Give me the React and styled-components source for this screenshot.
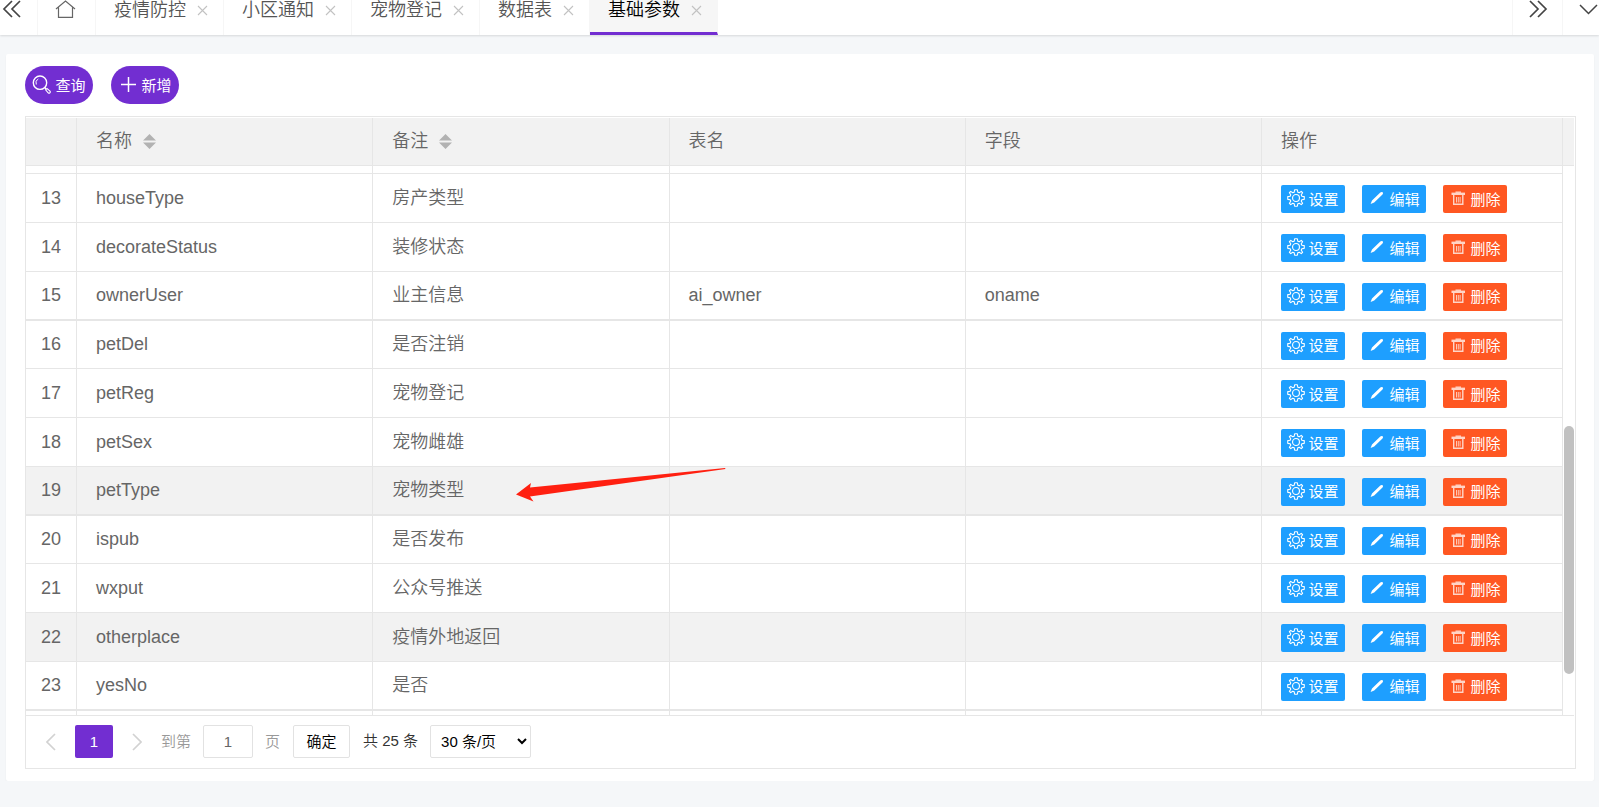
import { useState } from 'react';
import styled, { createGlobalStyle, ThemeProvider } from 'styled-components';

const theme = {
  purple: '#722ed1',
  blue: '#1e9fff',
  orange: '#ff5722',
  text: '#666',
  line: '#e6e6e6',
  head: '#f2f2f2',
};

const TABS = ['疫情防控', '小区通知', '宠物登记', '数据表', '基础参数'];

const ROWS = [
  { id: 13, name: 'houseType', remark: '房产类型' },
  { id: 14, name: 'decorateStatus', remark: '装修状态' },
  { id: 15, name: 'ownerUser', remark: '业主信息', table: 'ai_owner', field: 'oname' },
  { id: 16, name: 'petDel', remark: '是否注销' },
  { id: 17, name: 'petReg', remark: '宠物登记' },
  { id: 18, name: 'petSex', remark: '宠物雌雄' },
  { id: 19, name: 'petType', remark: '宠物类型', shaded: true, marked: true },
  { id: 20, name: 'ispub', remark: '是否发布' },
  { id: 21, name: 'wxput', remark: '公众号推送' },
  { id: 22, name: 'otherplace', remark: '疫情外地返回', shaded: true },
  { id: 23, name: 'yesNo', remark: '是否' },
];

// 图标 //
const LineIcon = ({ size, height, box, width = 1, children }) => (
  <svg
    width={size}
    height={height || size}
    viewBox={box || `0 0 ${size} ${height || size}`}
    fill="none"
    stroke="currentColor"
    strokeWidth={width}
    aria-hidden="true"
  >
    {children}
  </svg>
);

const DoubleLeftIcon = () => (
  <LineIcon size={20} width={1.7}>
    <path d="M10 1L2 9L10 17M18 1L10 9L18 17" />
  </LineIcon>
);

const DoubleRightIcon = () => (
  <LineIcon size={20} width={1.7}>
    <path d="M1 1L9 9L1 17M9 1L17 9L9 17" />
  </LineIcon>
);

const DownIcon = () => (
  <LineIcon size={20} width={1.5}>
    <path d="M1 5L9.5 13.5L18 5" />
  </LineIcon>
);

const HomeIcon = () => (
  <LineIcon size={22} height={20} width={1.2}>
    <path d="M1 9L10.5 1L20 9M3.5 7.5V17.3H17.5V7.5" />
  </LineIcon>
);

const CloseIcon = () => (
  <LineIcon size={11} width={1.1}>
    <path d="M1 1L10 10M10 1L1 10" />
  </LineIcon>
);

const SearchIcon = () => (
  <LineIcon size={19} width={1.4}>
    <circle cx="8" cy="7.7" r="6.7" />
    <path d="M4.3 9.5A4.2 4.2 0 0 1 6.3 4" strokeWidth="1" />
    <path d="M12.8 12.5L14 14" />
    <path d="M13.6 14.8L15 13.4L18.2 16.4Q18.5 17.2 17.8 18Q17 18.5 16.4 18Z" strokeWidth="1.1" />
  </LineIcon>
);

const PlusIcon = () => (
  <LineIcon size={19} width={1.5}>
    <path d="M10.5 2V17M3 9.5H18" />
  </LineIcon>
);

const GearIcon = () => (
  <LineIcon size={18} box="0 0 24 24" width={1.5}>
    <circle cx="12" cy="12" r="4.6" />
    <path
      strokeLinejoin="round"
      d="M10.2 1H13.8L14.4 4.2L16.4 5L19 3.2L20.8 5L19 7.6L19.8 9.6L23 10.2V13.8L19.8 14.4L19 16.4L20.8 19L19 20.8L16.4 19L14.4 19.8L13.8 23H10.2L9.6 19.8L7.6 19L5 20.8L3.2 19L5 16.4L4.2 14.4L1 13.8V10.2L4.2 9.6L5 7.6L3.2 5L5 3.2L7.6 5L9.6 4.2Z"
    />
  </LineIcon>
);

const PencilIcon = () => (
  <svg width="18" height="18" viewBox="0 0 18 18" fill="currentColor" aria-hidden="true">
    <path d="M12.3 3.6Q13.5 2.4 14.7 3.3Q15.6 4.4 14.5 5.5L6.2 13.4L2.6 15L4 11.4Z" />
  </svg>
);

const TrashIcon = () => (
  <LineIcon size={18} width={1.4}>
    <g opacity="0.75">
      <path d="M2.5 4.8H16" strokeWidth="2.4" />
      <path d="M6.5 3.2H12" />
      <path d="M4.7 6V15.3H13.8V6" />
      <path d="M7.5 8V13.5M9.3 8V13.5M11.1 8V13.5" strokeWidth="0.9" />
    </g>
  </LineIcon>
);

const SortIcon = () => (
  <svg width="13" height="15" viewBox="0 0 13 15" fill="#b2b2b2" aria-hidden="true">
    <path d="M6.5 0L13 6.5H0ZM0 8.5H13L6.5 15Z" />
  </svg>
);

const Pointer = () => (
  <StyledPointer viewBox="0 0 210 36" aria-hidden="true">
    <path d="M0 27.5L15 16L14 20.5L209 1L209.5 2L14 29.5L17.5 34.5Z" fill="#ff2011" />
  </StyledPointer>
);

const TabBar = () => {
  const [active, setActive] = useState('基础参数');
  return (
    <StyledTabBar>
      <BarButton $first aria-label="向左">
        <DoubleLeftIcon />
      </BarButton>
      <HomeButton aria-label="主页">
        <HomeIcon />
      </HomeButton>
      <TabList>
        {TABS.map((tab) => (
          <Tab key={tab} $active={tab === active}>
            <TabName $active={tab === active} onClick={() => setActive(tab)}>
              {tab}
            </TabName>
            <TabClose aria-label={`关闭${tab}`}>
              <CloseIcon />
            </TabClose>
          </Tab>
        ))}
      </TabList>
      <BarButton aria-label="向右">
        <DoubleRightIcon />
      </BarButton>
      <MenuButton aria-label="更多">
        <DownIcon />
      </MenuButton>
    </StyledTabBar>
  );
};

const ParamRow = ({ row }) => (
  <Row $shaded={row.shaded}>
    <Cell $center>{row.id}</Cell>
    <Cell>{row.name}</Cell>
    <Cell>
      {row.remark}
      {row.marked && <Pointer />}
    </Cell>
    <Cell>{row.table}</Cell>
    <Cell>{row.field}</Cell>
    <Cell>
      <Actions>
        <ActionButton>
          <GearIcon />
          设置
        </ActionButton>
        <ActionButton>
          <PencilIcon />
          编辑
        </ActionButton>
        <ActionButton $danger>
          <TrashIcon />
          删除
        </ActionButton>
      </Actions>
    </Cell>
  </Row>
);

const EdgeRow = ({ height }) => (
  <SliverRow $height={height}>
    {[1, 2, 3, 4, 5, 6].map((n) => (
      <Cell key={n} />
    ))}
  </SliverRow>
);

const Pager = () => {
  const [page, setPage] = useState('1');
  return (
    <StyledPager>
      <PageArrow disabled aria-label="上一页">
        <LineIcon size={10} height={18} width={1.7}>
          <path d="M9 1L1 9L9 17" />
        </LineIcon>
      </PageArrow>
      <CurrentPage>1</CurrentPage>
      <PageArrow disabled aria-label="下一页">
        <LineIcon size={10} height={18} width={1.7}>
          <path d="M1 1L9 9L1 17" />
        </LineIcon>
      </PageArrow>
      <JumpLabel>
        到第
        <PageInput value={page} onChange={(e) => setPage(e.target.value)} />页
      </JumpLabel>
      <ConfirmButton>确定</ConfirmButton>
      <Total>共 25 条</Total>
      <PageSize aria-label="每页条数" defaultValue="30">
        <option value="30">30 条/页</option>
        <option value="60">60 条/页</option>
        <option value="90">90 条/页</option>
      </PageSize>
    </StyledPager>
  );
};

const App = () => {
  return (
    <ThemeProvider theme={theme}>
      <GlobalStyle />
      <TabBar />
      <Card>
        <Toolbar>
          <RoundButton>
            <SearchIcon />
            查询
          </RoundButton>
          <RoundButton>
            <PlusIcon />
            新增
          </RoundButton>
        </Toolbar>
        <TableBox>
          <TableView>
            <Table>
              <colgroup>
                <Col $width="51px" />
                <Col />
                <Col />
                <Col />
                <Col />
                <Col $width="301px" />
              </colgroup>
              <thead>
                <tr>
                  <HeadCell aria-label="序号" />
                  <HeadCell>
                    <SortLabel>
                      名称
                      <SortIcon />
                    </SortLabel>
                  </HeadCell>
                  <HeadCell>
                    <SortLabel>
                      备注
                      <SortIcon />
                    </SortLabel>
                  </HeadCell>
                  <HeadCell>表名</HeadCell>
                  <HeadCell>字段</HeadCell>
                  <HeadCell>操作</HeadCell>
                </tr>
              </thead>
              <tbody>
                <EdgeRow height={8} />
                {ROWS.map((row) => (
                  <ParamRow key={row.id} row={row} />
                ))}
                <EdgeRow height={4} />
              </tbody>
            </Table>
            <ScrollColumn>
              <ScrollHead />
              <ScrollTrack>
                <ScrollThumb />
              </ScrollTrack>
            </ScrollColumn>
          </TableView>
          <Pager />
        </TableBox>
      </Card>
    </ThemeProvider>
  );
};

export default App;

const GlobalStyle = createGlobalStyle`
  * {
    box-sizing: border-box;
  }
  body {
    margin: 0;
    background-color: #f5f7f9;
    color: #666;
    font-family: 'Liberation Sans', 'Noto Sans CJK SC', sans-serif;
    font-size: 18px;
    font-weight: 350;
  }
  button, input, select {
    margin: 0;
    font-family: inherit;
    font-weight: inherit;
  }
  button {
    padding: 0;
    border: none;
    background: none;
    color: inherit;
    cursor: pointer;
  }
  svg {
    display: block;
    flex-shrink: 0;
  }
`;
const StyledTabBar = styled.nav`
  display: flex;
  height: 35px;
  background-color: #fff;
  box-shadow: 0 1px 2px rgba(0, 0, 0, 0.12);
`;
const BarButton = styled.button`
  display: flex;
  align-items: flex-start;
  width: ${({ $first }) => ($first ? '38px' : '51px')};
  padding-left: ${({ $first }) => ($first ? '2px' : '16px')};
  border-right: 1px solid #f6f6f6;
  border-left: ${({ $first }) => ($first ? 'none' : '1px solid #f6f6f6')};
  color: #444;
`;
const MenuButton = styled(BarButton)`
  width: 36px;
  border: none;
`;
const HomeButton = styled(BarButton)`
  width: 58px;
  padding-left: 17px;
  border-left: none;
  color: #666;
`;
const TabList = styled.div`
  display: flex;
  flex: 1;
`;
const Tab = styled.div`
  display: flex;
  gap: 11px;
  padding: 0 15px 0 18px;
  border-right: 1px solid #f6f6f6;
  border-bottom: ${({ $active, theme }) => ($active ? `3px solid ${theme.purple}` : 'none')};
  background-color: ${({ $active }) => ($active ? '#f6f6f6' : 'transparent')};
`;
const TabName = styled.button`
  height: 20px;
  font-size: 18px;
  line-height: 20px;
  color: ${({ $active }) => ($active ? '#000' : '#555')};
`;
const TabClose = styled.button`
  display: flex;
  align-items: center;
  height: 20px;
  color: #c2c2c2;
`;
const Card = styled.main`
  margin: 19px 5px 0 6px;
  padding: 12px 18px 12px 19px;
  border-radius: 2px;
  background-color: #fff;
  box-shadow: 0 1px 2px rgba(0, 0, 0, 0.05);
`;
const Toolbar = styled.div`
  display: flex;
  gap: 18px;
  margin-bottom: 12px;
`;
const RoundButton = styled.button`
  display: flex;
  align-items: center;
  justify-content: center;
  gap: 4px;
  width: 68px;
  height: 38px;
  padding-bottom: 2px;
  border-radius: 19px;
  background-color: ${({ theme }) => theme.purple};
  color: #fff;
  font-size: 15px;
  font-weight: 400;
`;
const TableBox = styled.section`
  padding: 1px 1px 0 0;
  border: 1px solid ${({ theme }) => theme.line};
`;
const TableView = styled.div`
  display: flex;
`;
const Table = styled.table`
  flex: 1;
  width: 100%;
  table-layout: fixed;
  border-collapse: separate;
  border-spacing: 0;
`;
const Col = styled.col`
  width: ${({ $width }) => $width || 'auto'};
`;
const HeadCell = styled.th`
  height: 48px;
  padding: 0 19px 1px;
  border-right: 1px solid ${({ theme }) => theme.line};
  border-bottom: 1px solid ${({ theme }) => theme.line};
  background-color: ${({ theme }) => theme.head};
  font-weight: inherit;
  line-height: 24px;
  text-align: left;
`;
const SortLabel = styled.span`
  display: flex;
  align-items: center;
  gap: 11px;
`;
const Cell = styled.td`
  position: relative;
  padding: ${({ $center }) => ($center ? '0' : '0 19px')};
  border-right: 1px solid ${({ theme }) => theme.line};
  border-bottom: 1px solid ${({ theme }) => theme.line};
  line-height: 23px;
  text-align: ${({ $center }) => ($center ? 'center' : 'left')};
`;
const Row = styled.tr`
  height: 49px;
  background-color: ${({ $shaded, theme }) => ($shaded ? theme.head : '#fff')};
  &:nth-child(4n + 1) {
    height: 48px;
  }
  &:nth-child(4n) > td {
    border-bottom-width: 2px;
  }
`;
const SliverRow = styled.tr`
  height: ${({ $height }) => $height}px;
  &:last-child > td {
    border-bottom: none;
  }
`;
const Actions = styled.div`
  display: flex;
  gap: 17px;
  padding-top: 2px;
`;
const ActionButton = styled.button`
  display: flex;
  align-items: center;
  justify-content: center;
  gap: 3px;
  width: 64px;
  height: 28px;
  padding-bottom: 2px;
  border-radius: 2px;
  background-color: ${({ $danger, theme }) => ($danger ? theme.orange : theme.blue)};
  color: #fff;
  font-size: 15px;
  font-weight: 400;
`;
const StyledPointer = styled.svg`
  position: absolute;
  top: 0;
  left: 143px;
  z-index: 1;
  width: 210px;
  height: 36px;
`;
const ScrollColumn = styled.div`
  display: flex;
  flex-direction: column;
  width: 11px;
`;
const ScrollHead = styled.div`
  height: 48px;
  border-bottom: 1px solid ${({ theme }) => theme.line};
  background-color: ${({ theme }) => theme.head};
`;
const ScrollTrack = styled.div`
  flex: 1;
  padding: 260px 0 0 1px;
`;
const ScrollThumb = styled.div`
  height: 248px;
  border-radius: 5px;
  background-color: #c1c1c1;
`;
const StyledPager = styled.footer`
  display: flex;
  align-items: center;
  height: 53px;
  padding: 0 0 1px 1px;
  border-top: 1px solid ${({ theme }) => theme.line};
  font-size: 15px;
  line-height: 20px;
`;
const PageArrow = styled.button`
  display: flex;
  align-items: center;
  justify-content: center;
  width: 48px;
  height: 33px;
  color: #d2d2d2;
`;
const CurrentPage = styled.button`
  width: 38px;
  height: 33px;
  border-radius: 2px;
  background-color: ${({ theme }) => theme.purple};
  color: #fff;
  font-size: 15px;
`;
const JumpLabel = styled.label`
  display: flex;
  align-items: center;
  gap: 12px;
  color: #999;
`;
const PageInput = styled.input`
  width: 50px;
  height: 33px;
  padding: 0;
  border: 1px solid #e2e2e2;
  border-radius: 2px;
  color: ${({ theme }) => theme.text};
  font-size: 15px;
  text-align: center;
`;
const ConfirmButton = styled.button`
  width: 57px;
  height: 33px;
  margin: 0 13px;
  padding-bottom: 2px;
  border: 1px solid #e2e2e2;
  border-radius: 2px;
  color: #000;
  font-size: 15px;
`;
const Total = styled.span`
  margin-right: 12px;
  padding-bottom: 2px;
  color: #333;
`;
const PageSize = styled.select`
  width: 101px;
  height: 33px;
  padding: 0 2px 0 6px;
  border: 1px solid #e2e2e2;
  border-radius: 2px;
  background-color: #fff;
  color: #000;
  font-size: 15px;
`;
